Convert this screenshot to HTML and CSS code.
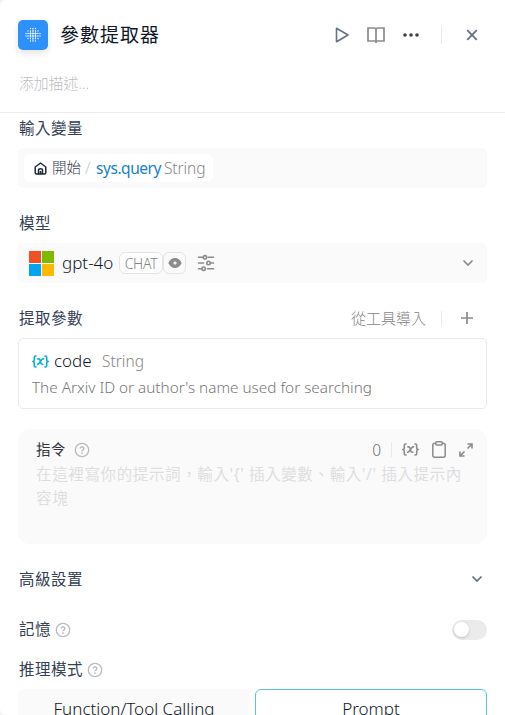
FILE: index.html
```html
<!DOCTYPE html>
<html lang="zh-Hant">
<head>
<meta charset="utf-8">
<title>參數提取器</title>
<link rel="stylesheet" href="styles.css">
</head>
<body>
<svg class="defs" width="0" height="0">
  <symbol id="help" viewBox="0 0 16 16"><circle cx="8" cy="8" r="6.7" fill="none" stroke="currentColor" stroke-width="1.3"/><path d="M6.3 6.5a1.75 1.75 0 1 1 2.6 1.6c-.6.35-.9.6-.9 1.2" fill="none" stroke="currentColor" stroke-width="1.4"/><circle cx="8" cy="11.1" r=".9" fill="currentColor"/></symbol>
  <symbol id="var" viewBox="0 0 18 16"><path d="M4.2 2.2H3.6Q2.4 2.2 2.4 3.5V6Q2.4 7.6 1.2 8Q2.4 8.4 2.4 10V12.500Q2.400 13.800 3.600 13.800H4.200M13.800 2.200H14.400Q15.600 2.200 15.600 3.500V6Q15.600 7.600 16.800 8Q15.600 8.400 15.600 10V12.500Q15.600 13.800 14.400 13.800H13.800M6.200 5.200H7.100Q8 5.200 8.300 6.200L9.500 10Q9.800 11 10.900 10.900H11.500M12.200 5.200Q11.200 5 10.400 6L7.600 9.900Q6.800 11 5.800 10.900" fill="none" stroke="currentColor" stroke-width="1.7" stroke-linecap="round"/></symbol>
  <symbol id="down" viewBox="0 0 12 12"><path d="M1.500 3.500L6 8L10.500 3.500" fill="none" stroke="currentColor" stroke-width="1.700"/></symbol>
</svg>
<main class="panel">
  <header class="head">
    <div class="head-row">
      <div class="logo">
        <svg width="16" height="16" viewBox="0 0 16 16" fill="none" stroke="#fff" stroke-linecap="round">
          <path d="M5.500 1.500h5.100M3 4h10.100M1 6.500h.01M3 6.500h10.100M15 6.500h.01M1 9h.01M3 9h10.100M15 9h.01M3 11.500h10.100M5.500 14h5.100" stroke-width="1.300" stroke-dasharray="0 2.500"/>
          <path d="M5.500 4v8M8 2.500v11M10.500 4v8M3.500 6.500h9M3.500 9h9" stroke-width=".6"/>
        </svg>
      </div>
      <h1>參數提取器</h1>
      <div class="head-tools">
        <svg class="slate" width="16" height="18" viewBox="0 0 16 18"><path d="M2.500 2.300V15.700L14 9Z" fill="none" stroke="currentColor" stroke-width="1.600" stroke-linejoin="round"/></svg>
        <svg class="book" width="18" height="18" viewBox="0 0 18 18"><path d="M1 2H7.500Q9 2 9 3.500Q9 2 10.500 2H17V15H1ZM9 3.500V17" fill="none" stroke="currentColor" stroke-width="1.700"/></svg>
        <svg class="more" width="16" height="6" viewBox="0 0 16 6" fill="#404040"><circle cx="2" cy="3" r="1.800"/><circle cx="8" cy="3" r="1.800"/><circle cx="14" cy="3" r="1.800"/></svg>
        <i class="line"></i>
        <svg class="slate close" width="12" height="12" viewBox="0 0 12 12"><path d="M1.200 1.200L10.800 10.800M10.800 1.200L1.200 10.800" stroke="currentColor" stroke-width="1.800"/></svg>
      </div>
    </div>
    <p class="desc">添加描述...</p>
  </header>

  <div class="content">
    <section>
      <h2>輸入變量</h2>
      <div class="field var-field">
        <div class="chip">
          <svg width="13" height="13" viewBox="0 0 13 13" fill="none" stroke="#1d2939" stroke-width="1.500" stroke-linejoin="round"><path d="M1.200 5L6.500 1L11.800 5V10.500Q11.800 12 10.300 12H2.700Q1.200 12 1.200 10.500ZM4.500 12V8Q4.500 6.700 6.500 6.700T8.500 8V12M6.500 9v3"/></svg>
          <span class="node">開始</span><span class="slash">/</span><span class="name">sys.query</span><span class="type">String</span>
        </div>
      </div>
    </section>

    <section>
      <h2>模型</h2>
      <div class="field model">
        <div class="ms"><i class="r"></i><i class="g"></i><i class="b"></i><i class="y"></i></div>
        <span class="model-name">gpt-4o</span>
        <span class="badge chat">CHAT</span>
        <span class="badge vision"><svg width="14" height="12" viewBox="0 0 14 12"><path d="M.3 6Q2.700 1 7 1T13.700 6Q11.300 11 7 11T.3 6Z" fill="#8b8b8b"/><path d="M7 3.500L7.700 5.300L9.500 6L7.700 6.700L7 8.500L6.300 6.700L4.500 6L6.300 5.300Z" fill="#fff"/></svg></span>
        <svg class="sliders" width="18" height="18" viewBox="0 0 18 18" fill="none" stroke="#8b8b8b" stroke-width="1.600" stroke-linecap="round"><path d="M1.500 3.300h4M11.500 3.300h5M1.500 9h5M14.300 9h2.200M1.500 14.700h2.700M10.500 14.700h6"/><circle cx="8" cy="3.300" r="1.700"/><circle cx="11.500" cy="9" r="1.700"/><circle cx="6.600" cy="14.700" r="1.700"/></svg>
        <svg class="arrow" width="12" height="12"><use href="#down"/></svg>
      </div>
    </section>

    <section>
      <div class="label-row">
        <h2>提取參數</h2>
        <span class="import">從工具導入</span>
        <i class="line short"></i>
        <svg width="12" height="12" viewBox="0 0 12 12"><path d="M0 6h12M6 0v12" stroke="#8b8b8b" stroke-width="1.700"/></svg>
      </div>
      <div class="param">
        <div class="param-top">
          <svg class="cyan" width="17" height="15"><use href="#var"/></svg>
          <span class="param-name">code</span>
          <span class="param-type">String</span>
        </div>
        <p>The Arxiv ID or author's name used for searching</p>
      </div>
    </section>

    <section class="prompt">
      <div class="prompt-top">
        <h3>指令</h3>
        <svg class="help" width="16" height="16"><use href="#help"/></svg>
        <span class="count">0</span>
        <i class="line short"></i>
        <svg class="gray" width="17" height="15"><use href="#var"/></svg>
        <svg class="clip" width="14" height="17" viewBox="0 0 14 17" fill="none" stroke="#8b8b8b" stroke-width="1.500"><rect x=".8" y="2.200" width="12.400" height="14" rx="2"/><rect x="3.800" y=".8" width="6.400" height="3.200" rx="1" fill="#fafafa"/></svg>
        <svg width="14" height="14" viewBox="0 0 14 14" fill="none" stroke="#8b8b8b" stroke-width="1.600"><path d="M8.500 1H13V5.500M13 1L8.500 5.500M1 8.500V13H5.500M1 13L5.500 8.500"/></svg>
      </div>
      <p class="hint"><span>在這裡寫你的提示詞，輸入'{' 插入變數、輸入'/' 插入提示內</span><span>容塊</span></p>
    </section>

    <div class="label-row advanced">
      <h2>高級設置</h2>
      <svg class="arrow" width="12" height="12"><use href="#down"/></svg>
    </div>
    <div class="label-row memory">
      <h2>記憶</h2>
      <svg class="help" width="16" height="16"><use href="#help"/></svg>
      <div class="toggle"><i></i></div>
    </div>
    <div class="label-row mode">
      <h2>推理模式</h2>
      <svg class="help" width="16" height="16"><use href="#help"/></svg>
    </div>
    <div class="options">
      <div class="option fn">Function/Tool Calling</div>
      <div class="option active">Prompt</div>
    </div>
  </div>
</main>
</body>
</html>
```
FILE: styles.css
```css
* { box-sizing: border-box; }
body { margin: 0; background: #f2f4f7; overflow: hidden; font-family: "Noto Sans", "Noto Sans CJK TC", sans-serif; font-weight: 300; }
h1, h2, h3, p { margin: 0; font-weight: 400; white-space: nowrap; }
svg { display: block; flex: none; }
.defs { position: absolute; }
.panel { height: 715px; background: #fff; border-radius: 6px 0 0 6px; overflow: hidden; }

.head { height: 113px; padding: 20px 21px 0 18px; border-bottom: 1px solid #ececec; }
.head-row { display: flex; align-items: center; height: 30px; }
.logo { width: 30px; height: 30px; border-radius: 5px; background: #2e90fa; box-shadow: 0 3px 6px rgba(16, 24, 40, .12); display: grid; place-items: center; }
h1 { margin-left: 12px; font-size: 19px; letter-spacing: 1px; line-height: 30px; color: #101828; }
.head-tools { display: flex; align-items: center; margin-left: auto; }
.slate { color: #667085; }
.book { margin-left: 17px; color: #8b8b8b; }
.more { margin-left: 18px; }
.line { width: 1px; height: 18px; background: #e9e9eb; margin-left: 22px; }
.line.short { height: 15px; }
.close { margin: 0 6px 0 24px; }
.desc { margin-top: 23px; padding-left: 1px; font-size: 14.800px; line-height: 20px; color: #bcbcbf; font-weight: 300; }

.content { padding: 3px 18px 0; }
section { margin-bottom: 23px; }
h2 { height: 24px; padding-left: 1px; font-size: 15.500px; letter-spacing: .5px; line-height: 25px; color: #344054; }
.field { height: 40px; margin-top: 8px; background: #fafafa; border-radius: 5px; display: flex; align-items: center; }
.var-field { padding-left: 6px; }
.chip { display: flex; align-items: center; width: 189px; height: 28px; padding-left: 10px; background: #fff; border-radius: 6px; font-size: 15.500px; line-height: 28px; white-space: nowrap; }
.node { width: 33px; margin-left: 5px; font-size: 14.500px; line-height: 27px; height: 28px; color: #344054; }
.slash { width: 10px; color: #c4c7cd; }
.name { width: 69px; padding-left: 1px; letter-spacing: -.45px; color: #1580d0; font-weight: 400; }
.type { letter-spacing: -.1px; color: #858585; }

.model { padding: 0 13px 0 11px; }
.ms { display: grid; grid-template-columns: 12px 12px; gap: 1px; width: 25px; }
.ms i { height: 12px; }
.r { background: #f25022; } .g { background: #7fba00; } .b { background: #00a4ef; } .y { background: #ffb900; }
.model-name { width: 57px; height: 26px; margin-left: 8px; font-size: 17px; line-height: 25px; color: #101828; }
.badge { display: flex; align-items: center; justify-content: center; height: 22px; border: 1px solid #e4e4e6; border-radius: 6px; font-size: 14px; color: #858585; }
.chat { width: 44px; letter-spacing: -.3px; background: #fdfdfd; }
.vision { width: 23px; }
.sliders { margin-left: 11px; }
.arrow { margin-left: auto; color: #8b8b8b; }

.label-row { display: flex; align-items: center; height: 24px; padding-right: 14px; }
.import { margin-left: auto; font-size: 15px; line-height: 24px; color: #858585; }
.label-row .line { margin: 0 19px 0 15px; }
.param { height: 71px; margin-top: 8px; padding: 10px 13px; border: 1px solid #eaeaec; border-radius: 5px; }
.param-top { display: flex; align-items: center; height: 24px; }
.cyan { color: #06aed4; }
.param-name { height: 25px; line-height: 23px; margin-left: 5px; width: 48px; font-size: 17px; color: #101828; }
.param-type { font-size: 15.500px; color: #858585; }
.param p { line-height: 28px; font-size: 15.300px; color: #787878; font-weight: 300; }
section:has(.param) { margin-bottom: 20px; }

.prompt { height: 115px; padding: 8px 14px 0 18px; border-radius: 12px; background: #fafafa; }
.prompt-top { display: flex; align-items: center; height: 25px; }
h3 { height: 24px; font-size: 14.500px; line-height: 22px; color: #303540; letter-spacing: .5px; }
.help { color: #b9bbc0; margin-left: 8px; }
.count { margin-left: auto; font-size: 15.500px; color: #707070; }
.prompt-top .line { margin: 0 10px; }
.gray { color: #8b8b8b; }
.clip { margin: 0 13px 0 13px; }
.hint span { display: block; font-size: 15.500px; letter-spacing: .63px; line-height: 24px; color: #dedee0; }

.advanced { padding-right: 4px; }
.advanced .arrow { color: #667085; }
.memory { margin-top: 26px; padding-right: 0; }
.memory .help, .mode .help { margin-left: 4px; margin-top: 1px; }
.toggle { width: 35px; height: 20px; margin: 2px 0 0 auto; padding: 2px; border-radius: 10px; background: #ebebeb; }
.toggle i { display: block; width: 15px; height: 15px; border-radius: 50%; background: #fff; box-shadow: 0 1px 3px rgba(0, 0, 0, .18); }
.mode { margin-top: 16px; }
.options { display: grid; grid-template-columns: 232px 232px; gap: 5px; margin-top: 8px; }
.option { height: 40px; border-radius: 6px; background: #fafafa; text-align: center; font-size: 17px; line-height: 37px; color: #101828; border: 1px solid #fafafa; }
.option.active { background: #fff; border-color: #59c2e4; }
```
